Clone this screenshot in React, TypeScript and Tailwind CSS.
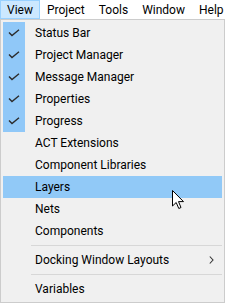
import { Fragment } from 'react';

type Entry =
  | { kind: 'item'; label: string; checked?: boolean; active?: boolean; submenu?: boolean }
  | { kind: 'sep' };

const topMenus = ['View', 'Project', 'Tools', 'Window', 'Help'];

const entries: Entry[] = [
  { kind: 'item', label: 'Status Bar', checked: true },
  { kind: 'item', label: 'Project Manager', checked: true },
  { kind: 'item', label: 'Message Manager', checked: true },
  { kind: 'item', label: 'Properties', checked: true },
  { kind: 'item', label: 'Progress', checked: true },
  { kind: 'item', label: 'ACT Extensions' },
  { kind: 'item', label: 'Component Libraries' },
  { kind: 'item', label: 'Layers', active: true },
  { kind: 'item', label: 'Nets' },
  { kind: 'item', label: 'Components' },
  { kind: 'sep' },
  { kind: 'item', label: 'Docking Window Layouts', submenu: true },
  { kind: 'sep' },
  { kind: 'item', label: 'Variables' },
];

function CheckMark() {
  return (
    <svg width="12" height="8" viewBox="0 0 12 8" fill="none">
      <path d="M1 3.5 L4 6.5 L11 0.8" stroke="#2b2b2b" strokeWidth="1.4" />
    </svg>
  );
}

function Chevron() {
  return (
    <svg width="5" height="8" viewBox="0 0 5 8" fill="none">
      <path d="M0.8 0.5 L4 4 L0.8 7.5" stroke="#333" strokeWidth="1.1" />
    </svg>
  );
}

function Cursor() {
  return (
    <svg width="13" height="20" viewBox="0 0 13 20" className="absolute left-[172px] top-[190px]">
      <path
        d="M0.5 0.5 L0.5 16 L4.2 12.5 L6.8 18.5 L9 17.5 L6.5 11.6 L11.5 11.6 Z"
        fill="#fff"
        stroke="#000"
        strokeWidth="1"
        strokeLinejoin="miter"
      />
    </svg>
  );
}

export default function App() {
  return (
    <div
      className="relative w-[225px] h-[303px] bg-white text-[12px] leading-none text-black overflow-hidden"
      style={{ fontFamily: '"Segoe UI", Roboto, sans-serif' }}
    >
      {/* Menu bar */}
      <div className="flex h-[19px]">
        {topMenus.map((m, i) => (
          <div
            key={m}
            className={`flex items-center px-[6px] border h-[19px] ${
              i === 0 ? 'bg-[#cce8ff] border-[#99d1ff]' : 'border-transparent'
            }`}
          >
            {m}
          </div>
        ))}
      </div>

      {/* Dropdown */}
      <div className="bg-[#f0f0f0] border border-[#cccccc] p-[2px]">
        {entries.map((e, i) => (
          <Fragment key={i}>
            {e.kind === 'sep' ? (
              <div className="h-[7px] flex items-center pl-[28px]">
                <div className="h-px w-full bg-[#d7d7d7]" />
              </div>
            ) : (
              <div className={`flex items-center h-[22px] ${e.active ? 'bg-[#91c9f7]' : ''}`}>
                <div
                  className={`w-[22px] h-full flex items-center justify-center ${
                    e.checked ? 'bg-[#90c8f8]' : ''
                  }`}
                >
                  {e.checked && <CheckMark />}
                </div>
                <span className="pl-[10px] flex-1">{e.label}</span>
                {e.submenu && (
                  <span className="pr-[8px] flex items-center">
                    <Chevron />
                  </span>
                )}
              </div>
            )}
          </Fragment>
        ))}
      </div>

      <Cursor />
    </div>
  );
}
